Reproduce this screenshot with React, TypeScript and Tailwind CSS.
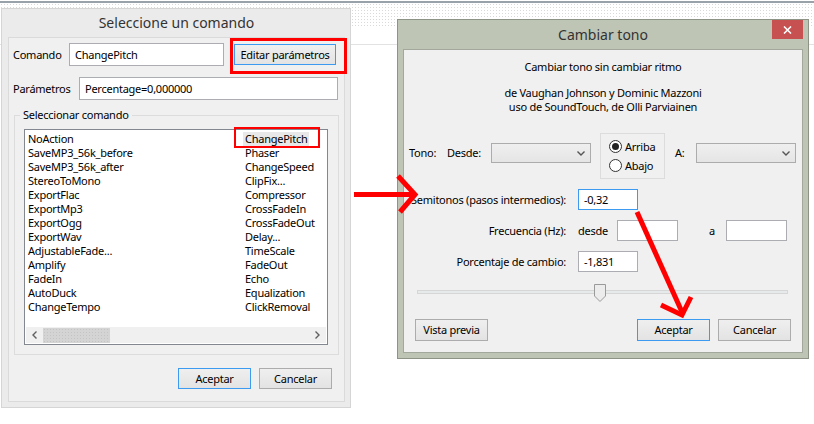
import React from "react";

const col1 = [
  "NoAction",
  "SaveMP3_56k_before",
  "SaveMP3_56k_after",
  "StereoToMono",
  "ExportFlac",
  "ExportMp3",
  "ExportOgg",
  "ExportWav",
  "AdjustableFade...",
  "Amplify",
  "FadeIn",
  "AutoDuck",
  "ChangeTempo",
];

const col2 = [
  "ChangePitch",
  "Phaser",
  "ChangeSpeed",
  "ClipFix...",
  "Compressor",
  "CrossFadeIn",
  "CrossFadeOut",
  "Delay...",
  "TimeScale",
  "FadeOut",
  "Echo",
  "Equalization",
  "ClickRemoval",
];

const Btn = ({ label, primary = false, w = "w-[73px]" }: { label: string; primary?: boolean; w?: string }) => (
  <div
    className={`flex h-[21px] ${w} items-center justify-center border bg-gradient-to-b from-[#efefef] to-[#e3e3e3] ${
      primary ? "border-[#3c9af0]" : "border-[#acacac]"
    }`}
  >
    {label}
  </div>
);

const Field = ({ value = "", w, focus = false }: { value?: string; w: string; focus?: boolean }) => (
  <div
    className={`flex h-[21px] ${w} items-center border bg-white px-[5px] ${
      focus ? "border-[#3c9af0]" : "border-[#abadb3]"
    }`}
  >
    {value}
  </div>
);

const Combo = () => (
  <div className="flex h-[20px] w-[100px] items-center justify-end border border-[#acacac] bg-gradient-to-b from-[#efefef] to-[#e5e5e5] pr-[5px]">
    <svg width="8" height="5" viewBox="0 0 8 5">
      <path d="M0.5 0.5 L4 4 L7.5 0.5" fill="none" stroke="#555" strokeWidth="1.4" />
    </svg>
  </div>
);

const Radio = ({ label, checked = false }: { label: string; checked?: boolean }) => (
  <div className="flex h-[19px] items-center">
    <div className="flex h-[13px] w-[13px] items-center justify-center rounded-full border border-[#333] bg-white">
      {checked && <div className="h-[7px] w-[7px] rounded-full bg-[#222]" />}
    </div>
    <span className="ml-[3px]">{label}</span>
  </div>
);

export default function App() {
  return (
    <div className="relative h-[424px] w-[814px] overflow-hidden bg-white font-['Noto_Sans',sans-serif] text-[11px] leading-[14px] tracking-[-0.25px] text-black">
      {/* desktop behind the windows */}
      <div className="mt-[1px] h-[2px] bg-[#9aa2a9]" />
      <div className="h-[24px] bg-[radial-gradient(#d9d9d9_0.7px,transparent_0.8px)] bg-[length:3px_3px]" />
      <div className="mt-[17px] h-px bg-[#e2e2e2]" />

      {/* left window */}
      <div className="absolute left-[1px] top-[8px] flex h-[400px] w-[350px] flex-col border border-[#d5d5d5] bg-[#ebebeb] pb-[5px] pl-[6px] pr-[5px]">
        <div className="flex h-[28px] items-center justify-center text-[14px] tracking-normal text-[#333]">
          Seleccione un comando
        </div>
        <div className="flex flex-1 flex-col border border-[#dadada] bg-[#f0f0f0]">
          <div className="mt-[5px] flex h-[23px] items-center">
            <span className="w-[60px] pl-[4px]">Comando</span>
            <div className="flex h-[23px] w-[155px] items-center border border-[#abadb3] bg-white px-[5px]">ChangePitch</div>
            <div className="ml-[10px]">
              <Btn label="Editar parámetros" primary w="w-[102px]" />
            </div>
          </div>
          <div className="mt-[11px] flex h-[23px] items-center">
            <span className="w-[70px] pl-[4px]">Parámetros</span>
            <div className="flex h-[23px] w-[259px] items-center border border-[#abadb3] bg-white px-[5px]">
              Percentage=0,000000
            </div>
          </div>

          <fieldset className="ml-[5px] mt-[7px] w-[325px] border border-[#dcdcdc]">
            <legend className="ml-[5px] px-[3px] leading-[16px]">Seleccionar comando</legend>
            <div className="mb-[9px] ml-[9px] mt-[6px] flex h-[216px] w-[304px] flex-col border border-[#828790] bg-white">
              <div className="flex flex-1 pl-px pt-[2px]">
                <div className="flex w-[217px] flex-col">
                  {col1.map((c) => (
                    <div key={c} className="h-[14px] pl-[2px]">
                      {c}
                    </div>
                  ))}
                </div>
                <div className="flex flex-col">
                  {col2.map((c, i) => (
                    <div key={c} className={`h-[14px] w-fit px-[2px] ${i === 0 ? "bg-[#e8e8e8]" : ""}`}>
                      {c}
                    </div>
                  ))}
                </div>
              </div>
              <div className="mx-px mb-px flex h-[16px] items-center bg-[#f0f0f0]">
                <div className="flex w-[17px] items-center justify-center">
                  <svg width="5" height="8" viewBox="0 0 5 8">
                    <path d="M4.5 0.5 L1 4 L4.5 7.5" fill="none" stroke="#606060" strokeWidth="1.4" />
                  </svg>
                </div>
                <div className="h-[15px] w-[67px] bg-[#d4d4d4] bg-[radial-gradient(#c4c4c4_0.6px,transparent_0.7px)] bg-[length:3px_3px]" />
                <div className="flex-1" />
                <div className="flex w-[17px] items-center justify-center">
                  <svg width="5" height="8" viewBox="0 0 5 8">
                    <path d="M0.5 0.5 L4 4 L0.5 7.5" fill="none" stroke="#606060" strokeWidth="1.4" />
                  </svg>
                </div>
              </div>
            </div>
          </fieldset>

          <div className="mt-[13px] flex justify-end gap-[8px] pr-[12px]">
            <Btn label="Aceptar" primary />
            <Btn label="Cancelar" />
          </div>
        </div>
      </div>

      {/* right window */}
      <div className="absolute left-[397px] top-[19px] flex h-[340px] w-[412px] flex-col border border-[#8d9486] bg-[#bec5b5] px-[5px] pb-[5px]">
        <div className="relative flex h-[29px] items-center justify-center text-[14px] tracking-normal text-[#333]">
          Cambiar tono
          <div className="absolute right-0 top-0 flex h-[19px] w-[31px] items-center justify-center bg-[#c75050]">
            <svg width="9" height="8" viewBox="0 0 9 8">
              <path d="M1 0.5 L8 7.5 M8 0.5 L1 7.5" stroke="white" strokeWidth="1.6" />
            </svg>
          </div>
        </div>
        <div className="flex flex-1 flex-col border border-[#a2a99c] bg-[#f0f0f0]">
          <div className="mt-[10px] text-center">Cambiar tono sin cambiar ritmo</div>
          <div className="mt-[12px] text-center">de Vaughan Johnson y Dominic Mazzoni</div>
          <div className="text-center">uso de SoundTouch, de Olli Parviainen</div>

          <div className="ml-[5px] mt-[19px] flex h-[46px] items-start">
            <span className="mt-[13px] w-[38px]">Tono:</span>
            <span className="mt-[13px] w-[44px]">Desde:</span>
            <div className="mt-[10px]">
              <Combo />
            </div>
            <div className="ml-[9px] flex h-[46px] w-[65px] flex-col border border-[#dcdcdc] pl-[8px] pt-[3px]">
              <Radio label="Arriba" checked />
              <Radio label="Abajo" />
            </div>
            <span className="ml-[10px] mt-[13px] w-[21px]">A:</span>
            <div className="mt-[10px]">
              <Combo />
            </div>
          </div>

          <div className="mt-[10px] flex items-center">
            <span className="w-[162px] whitespace-nowrap text-right">Semitonos (pasos intermedios):</span>
            <div className="ml-[12px]">
              <Field value="-0,32" w="w-[60px]" focus />
            </div>
          </div>
          <div className="mt-[10px] flex items-center">
            <span className="w-[162px] whitespace-nowrap text-right">Frecuencia (Hz):</span>
            <span className="ml-[12px] w-[39px]">desde</span>
            <Field w="w-[61px]" />
            <span className="ml-[31px] w-[17px]">a</span>
            <Field w="w-[61px]" />
          </div>
          <div className="mt-[10px] flex items-center">
            <span className="w-[162px] whitespace-nowrap text-right">Porcentaje de cambio:</span>
            <div className="ml-[12px]">
              <Field value="-1,831" w="w-[60px]" />
            </div>
          </div>

          <div className="relative ml-[13px] mt-[12px] h-[18px] w-[371px]">
            <div className="absolute left-0 right-0 top-[6px] h-[4px] border border-[#d6d6d6] bg-[#e7eaea]" />
            <svg className="absolute left-[177px] top-0" width="12" height="18" viewBox="0 0 12 18">
              <path d="M0.5 0.5 H11.5 V12 L6 17.5 L0.5 12 Z" fill="#ececec" stroke="#9a9a9a" />
            </svg>
          </div>

          <div className="mt-[17px] flex items-center pl-[11px] pr-[11px]">
            <Btn label="Vista previa" w="w-[73px] h-[22px]" />
            <div className="flex-1" />
            <Btn label="Aceptar" primary w="w-[73px] h-[22px]" />
            <div className="ml-[8px]">
              <Btn label="Cancelar" w="w-[73px] h-[22px]" />
            </div>
          </div>
        </div>
      </div>

      {/* red annotations */}
      <svg className="pointer-events-none absolute left-0 top-0" width="814" height="424" viewBox="0 0 814 424">
        <rect x="231.5" y="39.5" width="114" height="33" fill="none" stroke="#f00" strokeWidth="3" />
        <rect x="235" y="128" width="84" height="19" fill="none" stroke="#f00" strokeWidth="2" />
        <path d="M354 194.5 H413" stroke="#f00" strokeWidth="5" />
        <path d="M398 176 L415 194.5 L400 212" fill="none" stroke="#f00" strokeWidth="5" />
        <path d="M637 212 L682 312" stroke="#f00" strokeWidth="5" />
        <path d="M661 305 L682 315 L691 297" fill="none" stroke="#f00" strokeWidth="5" />
      </svg>
    </div>
  );
}
